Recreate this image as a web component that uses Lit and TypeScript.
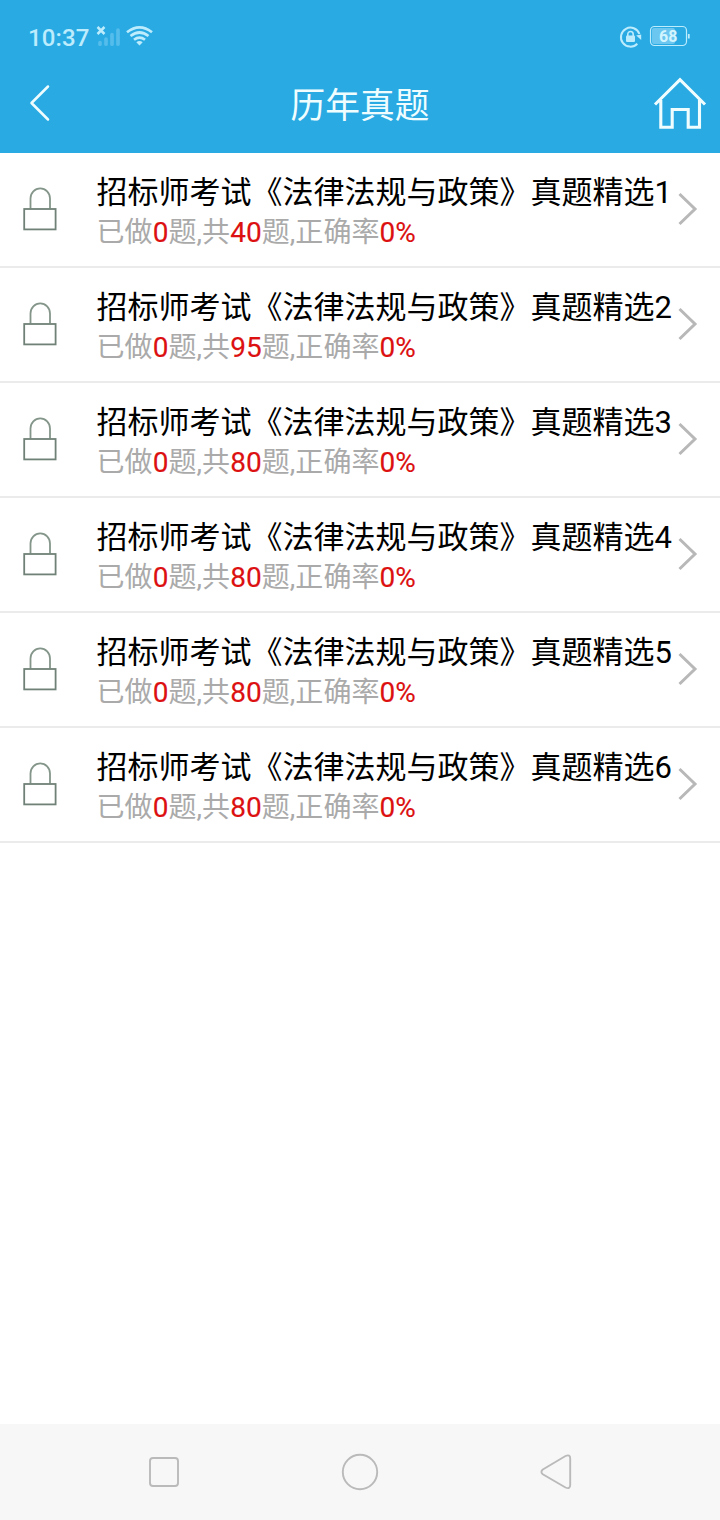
import { LitElement, html, css, svg } from "lit";
import { customElement, property } from "lit/decorators.js";

interface Paper {
  no: number;
  done: number;
  total: number;
  rate: number;
}

const papers: Paper[] = [40, 95, 80, 80, 80, 80].map((total, i) => ({
  no: i + 1,
  done: 0,
  total,
  rate: 0,
}));

@customElement("status-bar")
class StatusBar extends LitElement {
  static styles = css`
    :host {
      display: flex;
      height: 54px;
      padding: 0 30px 0 28px;
      box-sizing: border-box;
      align-items: flex-start;
      color: #bdecfd;
      font-family: Roboto, sans-serif;
    }
    .time {
      font-size: 24px;
      font-weight: 500;
      line-height: 28px;
      margin-top: 24px;
      width: 68px;
      letter-spacing: 0.1px;
    }
    .signals {
      margin-top: 22px;
      flex: 1;
    }
    .right {
      margin-top: 22px;
    }
    svg {
      display: block;
    }
    text {
      font: 700 16px Roboto, sans-serif;
    }
  `;

  render() {
    return html`
      <span class="time">10:37</span>
      <svg class="signals" width="60" height="28" viewBox="96 22 60 28" preserveAspectRatio="xMinYMin" fill="none">
        <path d="M97.500 27l7 7m0-7l-7 7" stroke="#bdecfd" stroke-width="2.500" />
        <path d="M100 42.700v1.500M106 39v5.200M112 34.700v9.500M118 30v14.200" stroke="#54bdec" stroke-width="3.700" stroke-linecap="round" />
        <g stroke="#bdecfd" stroke-width="2.700">
          <path d="M127 32.300Q139.500 22.500 152 32.300" />
          <path d="M130.500 36Q139.500 29 148.500 36" />
          <path d="M134 39.700Q139.500 35.500 145 39.700" />
        </g>
        <path d="M136.300 42.300Q139.500 39.700 142.700 42.300L139.500 45.500z" fill="#bdecfd" />
      </svg>
      <svg class="right" width="72" height="28" viewBox="618 22 72 28" fill="none">
        <path d="M637.300 43.700A9.500 9.500 0 1 1 639.400 34" stroke="#bdecfd" stroke-width="2" />
        <path d="M636.200 35.500l5-1v5.500z" fill="#bdecfd" />
        <rect x="626" y="35.500" width="9" height="6.500" rx="1" fill="#bdecfd" />
        <path d="M627.800 36v-1.800a2.700 2.700 0 0 1 5.400 0V36" stroke="#bdecfd" stroke-width="1.600" />
        <rect x="652" y="28" width="23" height="16" rx="2" fill="#6cc7f0" />
        <rect x="650.500" y="26.500" width="36" height="19" rx="4" stroke="#bdecfd" stroke-width="1.200" />
        <path d="M688.800 34v4.500" stroke="#bdecfd" stroke-width="1.800" />
        <text x="668.200" y="42" text-anchor="middle" fill="#d2f5ff">68</text>
      </svg>
    `;
  }
}

@customElement("nav-header")
class NavHeader extends LitElement {
  static styles = css`
    :host {
      display: grid;
      grid-template-columns: 80px 1fr 80px;
      height: 99px;
      color: #f0fdff;
    }
    .title {
      margin: 0;
      padding-top: 24px;
      text-align: center;
      font: 400 34.7px/51px "Noto Sans CJK SC", sans-serif;
    }
    svg {
      display: block;
    }
  `;

  render() {
    return html`
      <svg width="80" height="99" viewBox="0 54 80 99" fill="none">
        <path d="M48 86.500L31.500 103L48 119.500" stroke="#f0fdff" stroke-width="2.500" stroke-linecap="round" stroke-linejoin="round" />
      </svg>
      <h1 class="title">历年真题</h1>
      <svg width="80" height="99" viewBox="640 54 80 99" fill="none">
        <path d="M655 104.500L680 79.700L705 104.500M660.800 100V127.300H672.200V109.500H688.200V127.300H699.500V100" stroke="#f0fdff" stroke-width="3.100" />
      </svg>
    `;
  }
}

@customElement("paper-row")
class PaperRow extends LitElement {
  @property({ attribute: false }) paper!: Paper;

  static styles = css`
    :host {
      display: grid;
      grid-template-columns: 96px 1fr 48px;
      height: 115px;
      box-sizing: border-box;
      border-bottom: 2px solid #ebebeb;
      white-space: nowrap;
    }
    .name {
      padding: 17px 0 0 0.5px;
      font: 400 31px/46px Roboto, "Noto Sans CJK SC", sans-serif;
      color: #000;
    }
    .stats {
      padding-left: 0.5px;
      font: 400 28px/34px Roboto, "Noto Sans CJK SC", sans-serif;
      letter-spacing: 0.06px;
      color: #aaa;
    }
    .num {
      color: #dc1010;
      -webkit-text-stroke: 0.15px #dc1010;
    }
    svg {
      display: block;
    }
  `;

  render() {
    const { no, done, total, rate } = this.paper;
    return html`
      <svg width="96" height="113" viewBox="0 153 96 113" fill="none">
        <path d="M30.500 208.500V198.500a9.500 9.900 0 0 1 19.500 0v10" stroke="#84968a" stroke-width="1.800" />
        <rect x="24.200" y="209" width="31.400" height="20.400" stroke="#708277" stroke-width="1.800" />
      </svg>
      <div>
        <div class="name">招标师考试《法律法规与政策》真题精选${no}</div>
        <div class="stats">已做<span class="num">${done}</span>题,共<span class="num">${total}</span>题,正确率<span class="num">${rate}%</span></div>
      </div>
      <svg width="48" height="113" viewBox="672 153 48 113" fill="none">
        <path d="M679.500 194L695 209L679.500 224" stroke="#b8b8b8" stroke-width="3" />
      </svg>
    `;
  }
}

@customElement("system-nav")
class SystemNav extends LitElement {
  static styles = css`
    :host {
      display: flex;
      justify-content: center;
      height: 96px;
      background: #f7f7f7;
    }
    svg {
      display: block;
    }
  `;

  render() {
    const shapes = [
      svg`<rect x="150" y="1458" width="28" height="28" rx="3" />`,
      svg`<circle cx="360" cy="1472" r="17.200" />`,
      svg`<path d="M542.800 1469.500L565.500 1456Q570.200 1454 570.200 1458.500V1485Q570.200 1489.500 565.500 1487.500L542.800 1474.200Q540 1472 542.800 1469.500z" />`,
    ];
    return html`
      <svg width="720" height="96" viewBox="0 1424 720 96" fill="none" stroke="#bababa" stroke-width="1.900">${shapes}</svg>
    `;
  }
}

@customElement("app-root")
class AppRoot extends LitElement {
  static styles = css`
    :host {
      display: flex;
      flex-direction: column;
      width: 720px;
      height: 1520px;
      background: #fff;
      overflow: hidden;
    }
    .top {
      background: #29aae3;
    }
    .list {
      flex: 1;
    }
  `;

  render() {
    return html`
      <header class="top">
        <status-bar></status-bar>
        <nav-header></nav-header>
      </header>
      <main class="list">${papers.map((p) => html`<paper-row .paper=${p}></paper-row>`)}</main>
      <system-nav></system-nav>
    `;
  }
}
